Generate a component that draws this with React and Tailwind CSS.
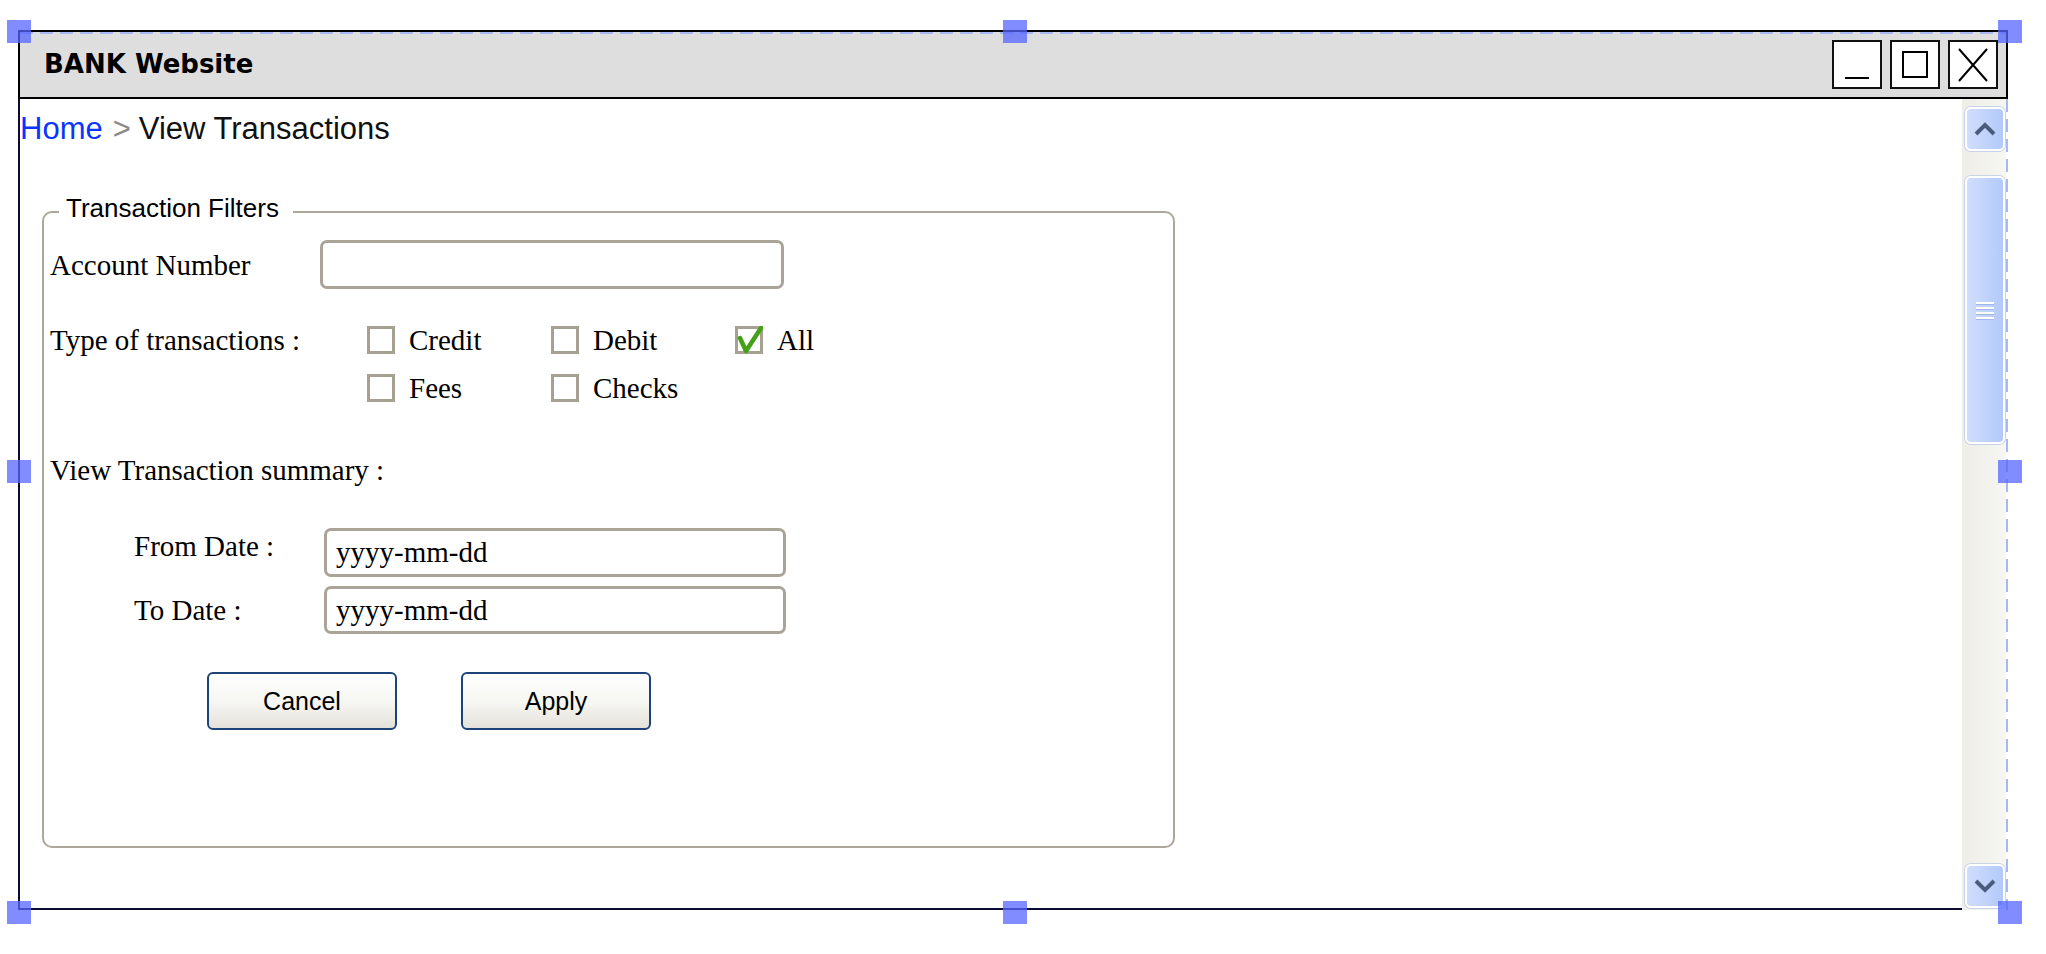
export default function App() {
    return (
        <div className="relative h-[954px] w-[2046px] overflow-hidden bg-white pl-[18px] pt-[30px]">
            {/* Window */}
            <div className="w-[1990px]">
                {/* Title bar */}
                <div className="flex h-[69px] items-center justify-between border-2 border-black bg-[#dedede] pl-[24px] pr-[8px]">
                    <span className="font-['DejaVu_Sans',sans-serif] text-[26px] font-bold text-black">BANK Website</span>
                    <div className="flex gap-[8px]">
                        <WinButton>
                            <span className="mt-[26px] h-[2px] w-[24px] bg-black"></span>
                        </WinButton>
                        <WinButton>
                            <span className="h-[27px] w-[26px] border-2 border-black"></span>
                        </WinButton>
                        <WinButton>
                            <svg width="32" height="36" viewBox="0 0 32 36">
                                <path d="M2 2 L30 34 M30 2 L2 34" stroke="#000" strokeWidth="2" fill="none" />
                            </svg>
                        </WinButton>
                    </div>
                </div>

                {/* Body */}
                <div className="flex h-[811px]">
                    <div className="flex-1 border-b-2 border-l-2 border-[#0c0c33] pt-[13px]">
                        <div className="flex font-['Liberation_Sans',sans-serif] text-[31px] leading-[34px]">
                            <span className="text-[#0a35ff]">Home</span>
                            <span className="ml-[10px] text-[#8a8a8a]">&gt;</span>
                            <span className="ml-[8px] text-[#111]">View Transactions</span>
                        </div>

                        <fieldset className="ml-[22px] mt-[47px] w-[1133px] rounded-[10px] border-2 border-[#aca899] pb-[116px] pl-[6px] font-['Liberation_Serif',serif] text-[29px] leading-[32px] text-black">
                            <legend className="ml-[9px] pb-[8px] pl-[7px] pr-[14px] font-['Liberation_Sans',sans-serif] text-[26px] leading-[30px] text-black">
                                Transaction Filters
                            </legend>

                            {/* Account number */}
                            <div className="mt-[9px] flex h-[49px] items-center">
                                <span className="w-[270px]">Account Number</span>
                                <input
                                    type="text"
                                    readOnly
                                    className="h-[49px] w-[464px] rounded-[7px] border-[3px] border-[#aaa498] bg-white px-[9px] outline-none"
                                />
                            </div>

                            {/* Type of transactions */}
                            <div className="mt-[35px] flex">
                                <span className="h-[32px] w-[317px]">Type of transactions :</span>
                                <div className="flex flex-col gap-[16px]">
                                    <div className="flex">
                                        <Check label="Credit" />
                                        <Check label="Debit" />
                                        <Check label="All" checked />
                                    </div>
                                    <div className="flex">
                                        <Check label="Fees" />
                                        <Check label="Checks" />
                                    </div>
                                </div>
                            </div>

                            <div className="mt-[50px] h-[32px]">View Transaction summary :</div>

                            {/* Dates */}
                            <div className="ml-[84px] mt-[42px] flex items-start">
                                <span className="w-[190px] pt-[2px]">From Date :</span>
                                <DateInput h="h-[49px]" />
                            </div>
                            <div className="ml-[84px] mt-[9px] flex items-start">
                                <span className="w-[190px] pt-[8px]">To Date :</span>
                                <DateInput h="h-[48px]" />
                            </div>

                            {/* Buttons */}
                            <div className="ml-[157px] mt-[38px] flex gap-[64px]">
                                <FormButton>Cancel</FormButton>
                                <FormButton>Apply</FormButton>
                            </div>
                        </fieldset>
                    </div>

                    {/* Scrollbar */}
                    <div className="flex w-[44px] flex-col bg-[linear-gradient(to_right,#eeede7,#f6f6f2)] pb-[2px] pl-[3px] pt-[8px]">
                        <ScrollBtn dir="up" />
                        <div className="mt-[25px] flex h-[268px] w-[40px] flex-col items-center justify-center gap-[3px] rounded-[6px] border-2 border-white bg-[linear-gradient(to_right,#d0defc,#b3c9fa)] shadow-[0_0_0_1px_#c8d2e8]">
                            <span className="h-[2px] w-[18px] bg-white shadow-[0_1px_0_#9fb6ee]"></span>
                            <span className="h-[2px] w-[18px] bg-white shadow-[0_1px_0_#9fb6ee]"></span>
                            <span className="h-[2px] w-[18px] bg-white shadow-[0_1px_0_#9fb6ee]"></span>
                            <span className="h-[2px] w-[18px] bg-white shadow-[0_1px_0_#9fb6ee]"></span>
                        </div>
                        <div className="flex-1"></div>
                        <ScrollBtn dir="down" />
                    </div>
                    <div className="w-[2px] bg-[repeating-linear-gradient(to_bottom,#a9b7f6_0_13px,transparent_13px_20px)]"></div>
                </div>
            </div>

            {/* Selection outline */}
            <div className="absolute left-[20px] top-[32px] h-[2px] w-[1986px] bg-[repeating-linear-gradient(to_right,#a9b7f6_0_13px,transparent_13px_20px)]"></div>

            {/* Selection handles */}
            <Handle className="left-[7px] top-[20px]" />
            <Handle className="left-[1003px] top-[20px]" />
            <Handle className="left-[1998px] top-[20px]" />
            <Handle className="left-[7px] top-[460px]" />
            <Handle className="left-[1998px] top-[460px]" />
            <Handle className="left-[7px] top-[901px]" />
            <Handle className="left-[1003px] top-[901px]" />
            <Handle className="left-[1998px] top-[901px]" />
        </div>
    );
}

function WinButton({ children }) {
    return (
        <div className="flex h-[49px] w-[50px] items-center justify-center border-2 border-[#111] bg-white">
            {children}
        </div>
    );
}

function Check({ label, checked }) {
    return (
        <div className="flex h-[32px] w-[184px] items-center gap-[14px]">
            <span className="relative h-[28px] w-[28px] shrink-0 border-[3px] border-[#a7a194] bg-white">
                {checked && (
                    <svg className="absolute left-[-3px] top-[-3px]" width="28" height="28" viewBox="0 0 28 28">
                        <path d="M5 12 L11 25 L26 2" fill="none" stroke="#44a016" strokeWidth="4.5" strokeLinecap="round" strokeLinejoin="round" />
                    </svg>
                )}
            </span>
            <span>{label}</span>
        </div>
    );
}

function DateInput({ h }) {
    return (
        <input
            type="text"
            readOnly
            defaultValue="yyyy-mm-dd"
            className={`${h} w-[462px] rounded-[7px] border-[3px] border-[#aaa498] bg-white px-[9px] text-black outline-none`}
        />
    );
}

function FormButton({ children }) {
    return (
        <button className="h-[58px] w-[190px] rounded-[6px] border-2 border-[#1d4478] bg-[linear-gradient(to_bottom,#ffffff,#f5f5f1_55%,#e4e2da)] font-['Liberation_Sans',sans-serif] text-[25px] text-black">
            {children}
        </button>
    );
}

function ScrollBtn({ dir }) {
    return (
        <div className="flex h-[44px] w-[40px] items-center justify-center rounded-[6px] border-2 border-white bg-[linear-gradient(to_right,#d0defc,#b3c9fa)] shadow-[0_0_0_1px_#c8d2e8]">
            <svg width="22" height="14" viewBox="0 0 22 14">
                <polyline
                    points={dir === "up" ? "2,12 11,3 20,12" : "2,2 11,11 20,2"}
                    fill="none"
                    stroke="#4b5b7e"
                    strokeWidth="4"
                />
            </svg>
        </div>
    );
}

function Handle({ className }) {
    return <div className={`absolute h-[23px] w-[24px] bg-[#5566ff]/75 ${className}`}></div>;
}
